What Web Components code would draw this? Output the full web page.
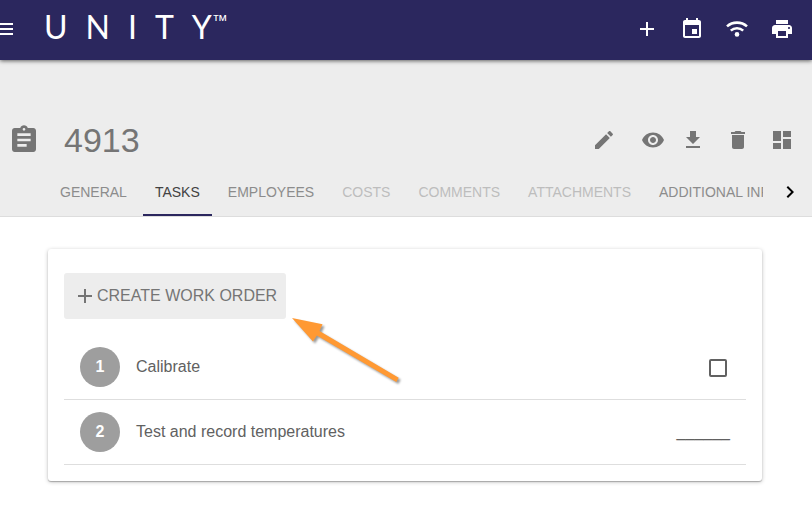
<!DOCTYPE html>
<html lang="en">
<head>
<meta charset="utf-8">
<meta name="viewport" content="width=device-width, initial-scale=1">
<title>Unity - 4913</title>
<style>
  body {
    margin: 0;
    background: #fff;
    color: #616161;
    font: 16px/24px "Liberation Sans", Arial, sans-serif;
  }
</style>
</head>
<body>
<unity-app></unity-app>

<script>
const ICONS = {
  menu: 'M3 18h18v-2H3v2zm0-5h18v-2H3v2zm0-7v2h18V6H3z',
  add: 'M19 13h-6v6h-2v-6H5v-2h6V5h2v6h6v2z',
  event: 'M17 12h-5v5h5v-5zM16 1v2H8V1H6v2H5c-1.11 0-1.99.9-1.99 2L3 19c0 1.1.89 2 2 2h14c1.1 0 2-.9 2-2V5c0-1.1-.9-2-2-2h-1V1h-2zm3 18H5V8h14v11z',
  print: 'M19 8H5c-1.66 0-3 1.34-3 3v6h4v4h12v-4h4v-6c0-1.66-1.34-3-3-3zm-3 11H8v-5h8v5zm3-7c-.55 0-1-.45-1-1s.45-1 1-1 1 .45 1 1-.45 1-1 1zm-1-9H6v4h12V3z',
  assignment: 'M19 3h-4.18C14.4 1.84 13.3 1 12 1c-1.3 0-2.4.84-2.82 2H5c-1.1 0-2 .9-2 2v14c0 1.1.9 2 2 2h14c1.1 0 2-.9 2-2V5c0-1.1-.9-2-2-2zm-7 0c.55 0 1 .45 1 1s-.45 1-1 1-1-.45-1-1 .45-1 1-1zm2 14H7v-2h7v2zm3-4H7v-2h10v2zm0-4H7V7h10v2z',
  edit: 'M3 17.25V21h3.75L17.81 9.94l-3.75-3.75L3 17.25zM20.71 7.04c.39-.39.39-1.02 0-1.41l-2.34-2.34c-.39-.39-1.02-.39-1.41 0l-1.83 1.83 3.75 3.75 1.83-1.83z',
  eye: 'M12 4.5C7 4.5 2.73 7.61 1 12c1.73 4.39 6 7.5 11 7.5s9.27-3.11 11-7.5c-1.73-4.39-6-7.5-11-7.5zM12 17c-2.76 0-5-2.24-5-5s2.24-5 5-5 5 2.24 5 5-2.24 5-5 5zm0-8c-1.66 0-3 1.34-3 3s1.34 3 3 3 3-1.34 3-3-1.34-3-3-3z',
  download: 'M19 9h-4V3H9v6H5l7 7 7-7zM5 18v2h14v-2H5z',
  trash: 'M6 19c0 1.1.9 2 2 2h8c1.1 0 2-.9 2-2V7H6v12zM19 4h-3.5l-1-1h-5l-1 1H5v2h14V4z',
  dashboard: 'M3 13h8V3H3v10zm0 8h8v-6H3v6zm10 0h8V11h-8v10zm0-18v6h8V3h-8z',
  chevron: 'M10 6L8.59 7.41 13.17 12l-4.58 4.59L10 18l6-6z'
};

class UnityIcon extends HTMLElement {
  constructor() {
    super();
    this.attachShadow({ mode: 'open' });
  }

  connectedCallback() {
    const name = this.getAttribute('name');
    let shape = `<path d="${ICONS[name]}"/>`;
    if (name === 'wifi') {
      shape = `
        <g fill="none" stroke="currentColor" stroke-width="2.6">
          <path d="M2 9.4c5.6-5 14.4-5 20 0"/>
          <path d="M5.8 13.6c3.5-3.1 8.9-3.1 12.4 0"/>
        </g>
        <circle cx="12" cy="17.4" r="2.3"/>`;
    }
    this.shadowRoot.innerHTML = `
      <style>
        :host { display: block; width: var(--icon-size, 24px); height: var(--icon-size, 24px); flex: none; }
        svg { display: block; width: 100%; height: 100%; fill: currentColor; overflow: visible; }
      </style>
      <svg viewBox="${this.getAttribute('box') || '0 0 24 24'}" aria-hidden="true">${shape}</svg>
    `;
  }
}

class IconButton extends HTMLElement {
  constructor() {
    super();
    this.attachShadow({ mode: 'open' });
  }

  connectedCallback() {
    this.shadowRoot.innerHTML = `
      <style>
        :host { display: block; flex: none; }
        button { display: block; padding: 0; border: 0; background: none; color: inherit; cursor: pointer; }
      </style>
      <button type="button" aria-label="${this.getAttribute('label')}"><slot></slot></button>
    `;
  }
}

class UnityLogo extends HTMLElement {
  constructor() {
    super();
    this.attachShadow({ mode: 'open' }).innerHTML = `
      <style>
        :host { display: block; }
        a { display: flex; gap: 18px; color: inherit; text-decoration: none; font: 400 32px/40px Lato, sans-serif; }
        .last { display: flex; }
        sup { font: 16px/28px "Liberation Sans", Arial, sans-serif; vertical-align: baseline; }
      </style>
      <a href="#"><span>U</span> <span>N</span> <span>I</span> <span>T</span> <span class="last">Y<sup>™</sup></span></a>
    `;
  }
}

class UnityToolbar extends HTMLElement {
  constructor() {
    super();
    this.attachShadow({ mode: 'open' }).innerHTML = `
      <style>
        :host { display: block; position: relative; z-index: 1; }
        header {
          display: flex;
          align-items: center;
          height: 60px;
          box-sizing: border-box;
          padding: 0 18px 2px 0;
          background: #2b275e;
          color: #fff;
          box-shadow: 0 1px 4px rgba(0, 0, 0, .6);
        }
        .menu { margin-left: -8px; }
        unity-logo { margin: 0 0 4px 28px; }
        nav { display: flex; gap: 21px; margin-left: auto; }
      </style>
      <header>
        <icon-button class="menu" label="Menu"><unity-icon name="menu"></unity-icon></icon-button>
        <unity-logo></unity-logo>
        <nav>
          <icon-button label="Add"><unity-icon name="add"></unity-icon></icon-button>
          <icon-button label="Calendar"><unity-icon name="event"></unity-icon></icon-button>
          <icon-button label="Connection"><unity-icon name="wifi"></unity-icon></icon-button>
          <icon-button label="Print"><unity-icon name="print"></unity-icon></icon-button>
        </nav>
      </header>
    `;
  }
}

class RecordHeader extends HTMLElement {
  constructor() {
    super();
    this.attachShadow({ mode: 'open' }).innerHTML = `
      <style>
        :host { display: block; padding-top: 56px; background: #ededed; border-bottom: 1px solid #ddd; color: #757575; }
        .title { display: flex; align-items: center; height: 48px; padding: 0 18px 4px 8px; }
        .title > unity-icon { --icon-size: 32px; }
        h1 { margin: 0 0 0 24px; font-size: 34px; line-height: 40px; font-weight: 400; }
        .actions { display: flex; gap: 21px; margin-left: auto; }
      </style>
      <div class="title">
        <unity-icon name="assignment"></unity-icon>
        <h1><slot name="title"></slot></h1>
        <div class="actions">
          <icon-button label="Edit"><unity-icon name="edit" box="-2 0 24 24"></unity-icon></icon-button>
          <icon-button label="View"><unity-icon name="eye" box="-6 0 24 24"></unity-icon></icon-button>
          <icon-button label="Download"><unity-icon name="download" box="-1 0 24 24"></unity-icon></icon-button>
          <icon-button label="Delete"><unity-icon name="trash" box="-1 0 24 24"></unity-icon></icon-button>
          <icon-button label="Dashboard"><unity-icon name="dashboard"></unity-icon></icon-button>
        </div>
      </div>
      <slot></slot>
    `;
  }
}

class TabBar extends HTMLElement {
  constructor() {
    super();
    this.attachShadow({ mode: 'open' }).innerHTML = `
      <style>
        :host { display: flex; align-items: center; height: 48px; padding: 0 10px 0 48px; }
        .tabs { display: flex; flex: 1; gap: 4px; min-width: 0; height: 100%; overflow: hidden; }
        .next { margin-left: 15px; color: #000; }
      </style>
      <div class="tabs" role="tablist"><slot></slot></div>
      <icon-button class="next" label="Next tabs"><unity-icon name="chevron"></unity-icon></icon-button>
    `;
  }
}

class TabItem extends HTMLElement {
  constructor() {
    super();
    this.attachShadow({ mode: 'open' });
  }

  connectedCallback() {
    this.shadowRoot.innerHTML = `
      <style>
        :host { display: block; flex: none; }
        button {
          height: 100%;
          padding: 2px 12px 0;
          border: 0;
          border-bottom: 2px solid transparent;
          background: none;
          color: #8c8c8c;
          font: 14px/20px "Liberation Sans", Arial, sans-serif;
          white-space: nowrap;
        }
        button:disabled { color: #bdbdbd; }
        button[aria-selected=true] { border-color: #2b275e; color: #424242; }
      </style>
      <button type="button" role="tab" aria-selected="${this.hasAttribute('selected')}"
        ${this.hasAttribute('disabled') ? 'disabled' : ''}><slot></slot></button>
    `;
  }
}

class TaskCard extends HTMLElement {
  constructor() {
    super();
    this.attachShadow({ mode: 'open' }).innerHTML = `
      <style>
        :host {
          display: block;
          position: relative;
          margin: 32px 50px 32px 48px;
          padding: 24px 16px 16px;
          border-radius: 3px;
          background: #fff;
          box-shadow: 0 1px 4px rgba(0, 0, 0, .24), 0 1px 1px rgba(0, 0, 0, .24);
        }
        .create {
          display: flex;
          align-items: center;
          height: 46px;
          margin-bottom: 16px;
          padding: 0 9px;
          border: 0;
          border-radius: 3px;
          background: #ededed;
          color: #757575;
          font: inherit;
        }
        .arrow { position: absolute; left: 244px; top: 69px; width: 112px; height: 70px; filter: drop-shadow(2px 2px 1px rgba(0, 0, 0, .4)); }
      </style>
      <button class="create" type="button"><unity-icon name="add"></unity-icon>CREATE WORK ORDER</button>
      <slot></slot>
      <svg class="arrow" viewBox="0 0 112 70" aria-hidden="true">
        <path fill="#ff9933" d="M0 0l30.5 6.3-3 6.7L106.7 59.7l-2.4 4.3L24.8 17.6l-3.8 6z"/>
      </svg>
    `;
  }
}

class TaskRow extends HTMLElement {
  constructor() {
    super();
    this.attachShadow({ mode: 'open' });
  }

  connectedCallback() {
    const control = this.getAttribute('type') === 'check'
      ? '<input id="field" type="checkbox">'
      : '<button id="field" type="button">______</button>';
    this.shadowRoot.innerHTML = `
      <style>
        :host { display: flex; align-items: center; height: 64px; padding: 0 16px; border-bottom: 1px solid #dedede; }
        .number {
          width: 40px;
          border-radius: 50%;
          background: #9e9e9e;
          color: #fff;
          font-weight: 700;
          line-height: 40px;
          text-align: center;
        }
        label { flex: 1; margin-left: 16px; }
        input {
          appearance: none;
          width: 18px;
          height: 18px;
          margin: 2px 3px 0;
          border: 2px solid #616161;
          border-radius: 2px;
        }
        input:checked { background: #616161; }
        button { padding: 0; border: 0; background: none; color: inherit; font: inherit; }
      </style>
      <span class="number">${this.getAttribute('number')}</span>
      <label for="field"><slot></slot></label>
      ${control}
    `;
  }
}

class UnityApp extends HTMLElement {
  constructor() {
    super();
    this.attachShadow({ mode: 'open' }).innerHTML = `
      <style>
        :host { display: block; }
        main { display: flow-root; }
      </style>
      <unity-toolbar></unity-toolbar>
      <record-header>
        <span slot="title">4913</span>
        <tab-bar>
          <tab-item>GENERAL</tab-item>
          <tab-item selected>TASKS</tab-item>
          <tab-item>EMPLOYEES</tab-item>
          <tab-item disabled>COSTS</tab-item>
          <tab-item disabled>COMMENTS</tab-item>
          <tab-item disabled>ATTACHMENTS</tab-item>
          <tab-item>ADDITIONAL INFO</tab-item>
        </tab-bar>
      </record-header>
      <main>
        <task-card>
          <task-row number="1" type="check">Calibrate</task-row>
          <task-row number="2">Test and record temperatures</task-row>
        </task-card>
      </main>
    `;
  }
}

customElements.define('unity-icon', UnityIcon);
customElements.define('icon-button', IconButton);
customElements.define('unity-logo', UnityLogo);
customElements.define('unity-toolbar', UnityToolbar);
customElements.define('record-header', RecordHeader);
customElements.define('tab-bar', TabBar);
customElements.define('tab-item', TabItem);
customElements.define('task-card', TaskCard);
customElements.define('task-row', TaskRow);
customElements.define('unity-app', UnityApp);
</script>
</body>
</html>
